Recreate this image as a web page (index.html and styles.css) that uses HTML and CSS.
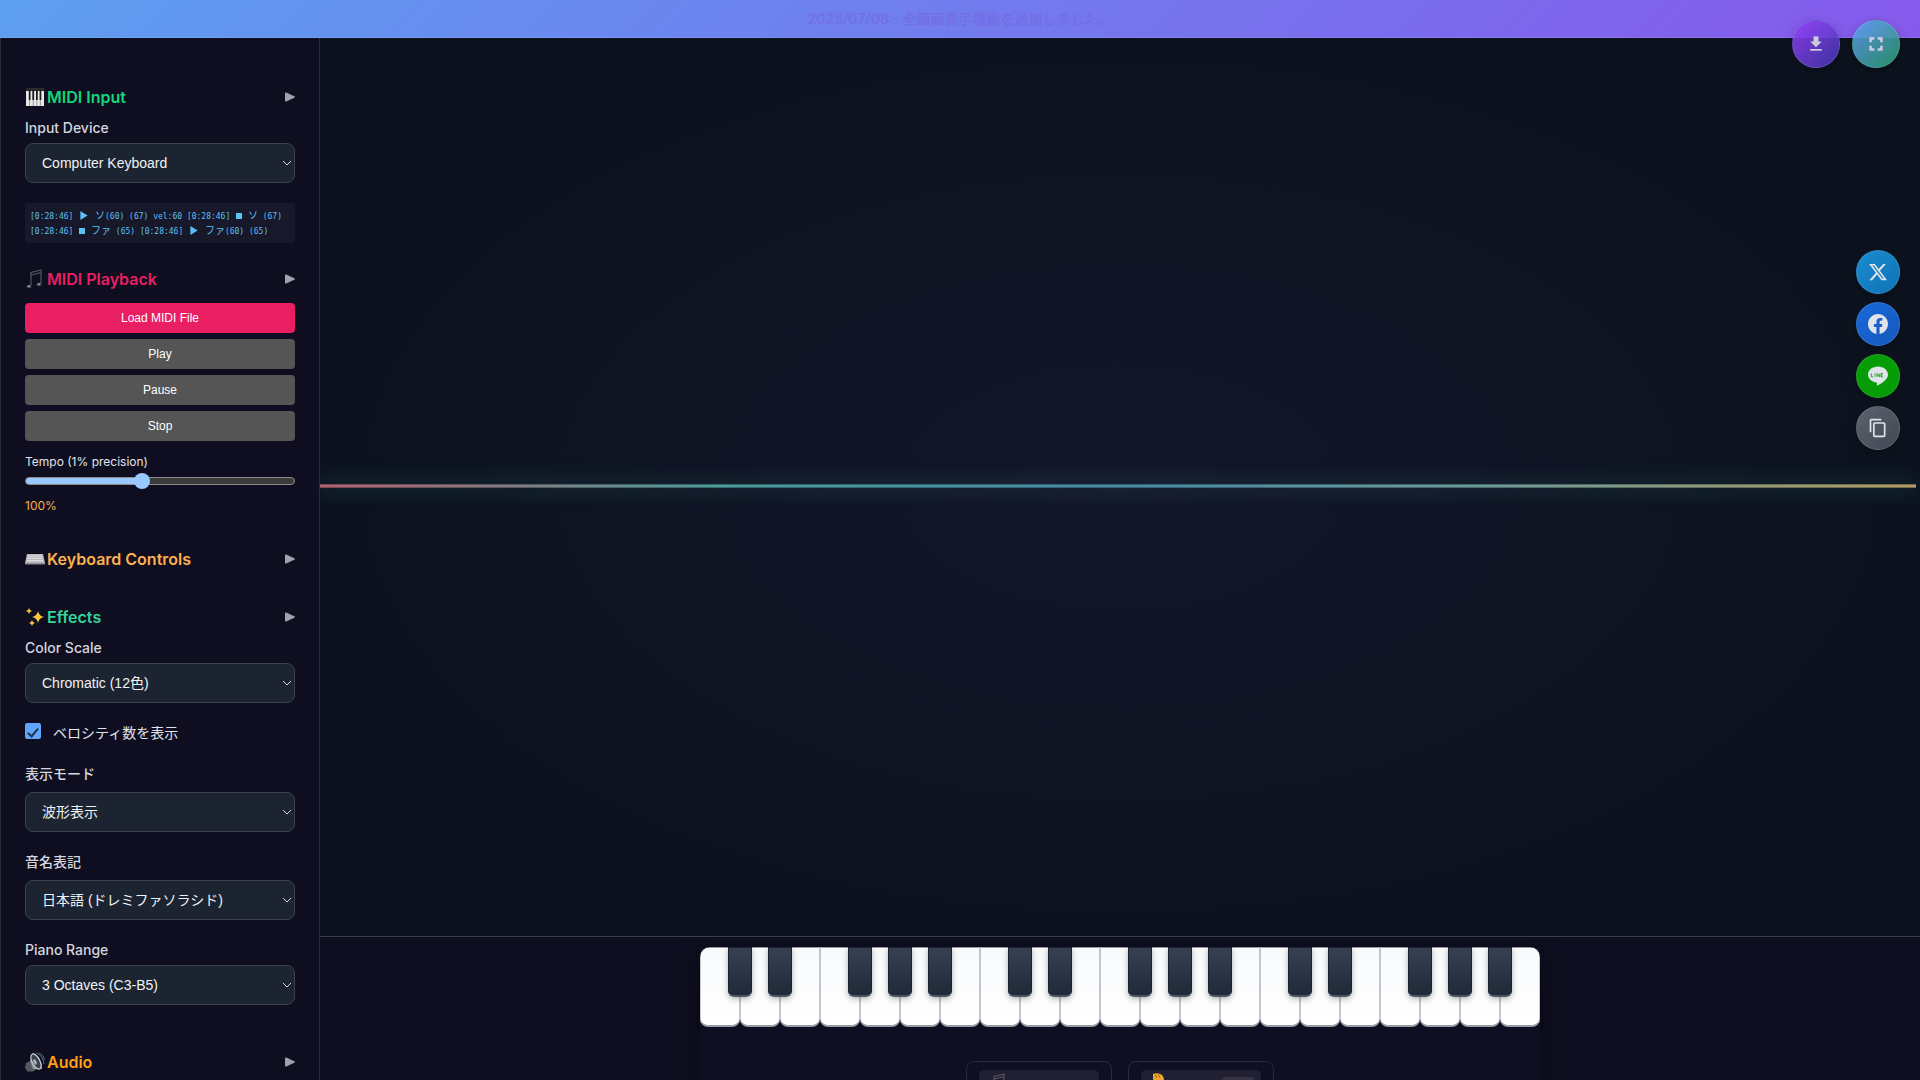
FILE: index.html
```html
<!DOCTYPE html>
<html lang="ja">
<head>
<meta charset="utf-8">
<meta name="viewport" content="width=device-width, initial-scale=1">
<title>MIDI Visualizer</title>
<link rel="stylesheet" href="styles.css">
</head>
<body>
<header class="notice"><p class="notice-text">2025/07/08 - 全画面表示機能を追加しました。</p></header>

<div class="app">
  <aside class="sidebar">
    <section class="section section-input">
      <h2 class="heading green">
        <svg class="emoji" viewBox="0 0 20 20" aria-hidden="true"><path fill="#2a2a2c" d="M1 1h18v3H1z"/><path fill="#e8e8e4" d="M1 4h18v15H1z"/><path stroke="#777" stroke-width=".7" d="M4.600 4v15M8.200 4v15M11.800 4v15M15.400 4v15"/><path fill="#17171b" d="M3.800 3h1.700v10H3.800zM7.400 3h1.700v10H7.400zM11 3h1.700v10H11zM14.600 3h1.700v10h-1.700z"/></svg>
        MIDI Input <svg class="arrow" viewBox="0 0 10 10" aria-hidden="true"><path d="M0 1.500Q0 0 1.300.6l8 3.700q1.300.7 0 1.400l-8 3.700Q0 10 0 8.500z"/></svg>
      </h2>
      <label class="label" for="device">Input Device</label>
      <div class="select-wrap"><select class="select" id="device"><option>Computer Keyboard</option></select><svg class="chevron" viewBox="0 0 10 6" aria-hidden="true"><path d="M1 1l4 4 4-4"/></svg></div>
      <div class="log">[0:28:46] <svg class="mark-play" viewBox="0 0 8 10" role="img"><path d="M0 0l8 5-8 5z"/></svg> <span class="kana">ソ</span>(60) (67) vel:60 [0:28:46] <i class="mark-stop"></i> <span class="kana">ソ</span> (67)<br>[0:28:46] <i class="mark-stop"></i> <span class="kana">ファ</span> (65) [0:28:46] <svg class="mark-play" viewBox="0 0 8 10" role="img"><path d="M0 0l8 5-8 5z"/></svg> <span class="kana">ファ</span>(60) (65)</div>
    </section>

    <section class="section section-playback">
      <h2 class="heading pink">
        <svg class="emoji" viewBox="0 0 20 20" aria-hidden="true"><path fill="none" stroke="#55565c" stroke-width="1.200" d="M6 16V3.500L16 1v14M6 6l10-2.500"/><ellipse cx="4" cy="17.500" rx="2.500" ry="1.800" fill="#4b4d54"/><ellipse cx="14" cy="15.500" rx="2.500" ry="1.800" fill="#4b4d54"/><path stroke="#c9ccd2" d="M3 17.500l2-.8M13 15.500l2-.8"/></svg>
        MIDI Playback <svg class="arrow" viewBox="0 0 10 10" aria-hidden="true"><path d="M0 1.500Q0 0 1.300.6l8 3.700q1.300.7 0 1.400l-8 3.700Q0 10 0 8.500z"/></svg>
      </h2>
      <div class="buttons">
        <button class="button primary" type="button">Load MIDI File</button>
        <button class="button" type="button">Play</button>
        <button class="button" type="button">Pause</button>
        <button class="button" type="button">Stop</button>
      </div>
      <label class="tempo-label" for="tempo">Tempo (1% precision)</label>
      <input class="tempo" id="tempo" type="range" min="10" max="220" value="100">
      <output class="tempo-value" for="tempo">100%</output>
    </section>

    <section class="section section-keys">
      <h2 class="heading orange">
        <svg class="emoji" viewBox="0 0 20 20" aria-hidden="true"><path fill="#b9b9bd" d="M2 5h16l2 9H0z"/><path fill="#8d8d92" d="M0 14h20v1.500H0z"/><path stroke="#e9e9eb" stroke-width="1.200" stroke-dasharray="1.600 .5" d="M3 7h14M2.500 9.300h15M2 11.600h16"/></svg>
        Keyboard Controls <svg class="arrow" viewBox="0 0 10 10" aria-hidden="true"><path d="M0 1.500Q0 0 1.300.6l8 3.700q1.300.7 0 1.400l-8 3.700Q0 10 0 8.500z"/></svg>
      </h2>
    </section>

    <section class="section section-effects">
      <h2 class="heading mint">
        <svg class="emoji" viewBox="0 0 20 20" aria-hidden="true"><path fill="#ffc93c" d="M13 4q.8 5 6 6-5.200 1-6 6-.8-5-6-6 5.200-1 6-6zM4 1q.4 2.600 3 3-2.600.4-3 3-.4-2.600-3-3 2.600-.4 3-3zM7 13q.4 2.600 3 3-2.600.4-3 3-.4-2.600-3-3 2.600-.4 3-3z"/></svg>
        Effects <svg class="arrow" viewBox="0 0 10 10" aria-hidden="true"><path d="M0 1.500Q0 0 1.300.6l8 3.700q1.300.7 0 1.400l-8 3.700Q0 10 0 8.500z"/></svg>
      </h2>
      <div class="field">
        <label class="label" for="scale">Color Scale</label>
        <div class="select-wrap"><select class="select" id="scale"><option>Chromatic (12色)</option></select><svg class="chevron" viewBox="0 0 10 6" aria-hidden="true"><path d="M1 1l4 4 4-4"/></svg></div>
      </div>
      <div class="check-row"><input class="check" id="velocity" type="checkbox" checked><label class="check-label" for="velocity">ベロシティ数を表示</label></div>
      <div class="field">
        <label class="label label-ja" for="mode">表示モード</label>
        <div class="select-wrap"><select class="select" id="mode"><option>波形表示</option></select><svg class="chevron" viewBox="0 0 10 6" aria-hidden="true"><path d="M1 1l4 4 4-4"/></svg></div>
      </div>
      <div class="field">
        <label class="label label-ja" for="names">音名表記</label>
        <div class="select-wrap"><select class="select" id="names"><option>日本語 (ドレミファソラシド)</option></select><svg class="chevron" viewBox="0 0 10 6" aria-hidden="true"><path d="M1 1l4 4 4-4"/></svg></div>
      </div>
      <div class="field">
        <label class="label" for="range">Piano Range</label>
        <div class="select-wrap"><select class="select" id="range"><option>3 Octaves (C3-B5)</option></select><svg class="chevron" viewBox="0 0 10 6" aria-hidden="true"><path d="M1 1l4 4 4-4"/></svg></div>
      </div>
    </section>

    <section class="section">
      <h2 class="heading amber">
        <svg class="emoji" viewBox="0 0 20 20" aria-hidden="true"><path fill="#55595e" d="M1 11l4-2 7 8-4 2.500H2.500L0 16z"/><path fill="#8c969d" d="M5 9L8 1q9 4 9 16l-9 0z"/><ellipse cx="11" cy="9.500" rx="3.800" ry="8.300" transform="rotate(-28 11 9.500)" fill="#39434b" stroke="#c8d0d3" stroke-width="1.200"/><ellipse cx="10" cy="10" rx="1.500" ry="3" transform="rotate(-28 10 10)" fill="#a5b2b9"/><path fill="none" stroke="#507083" d="M11 1q7 2 8 11M14 .8q4.500 2 5.500 7"/></svg>
        Audio <svg class="arrow" viewBox="0 0 10 10" aria-hidden="true"><path d="M0 1.500Q0 0 1.300.6l8 3.700q1.300.7 0 1.400l-8 3.700Q0 10 0 8.500z"/></svg>
      </h2>
    </section>
  </aside>

  <main class="main">
    <div class="stage"><div class="wave"></div></div>
    <div class="piano-panel">
      <div class="piano-box">
        <div class="piano" id="piano"></div>
        <div class="cards">
          <div class="card"><div class="card-head">
            <svg class="emoji" viewBox="0 0 20 20" aria-hidden="true"><path fill="none" stroke="#55565c" stroke-width="1.200" d="M6 16V3.500L16 1v14M6 6l10-2.500"/></svg>
          </div></div>
          <div class="card"><div class="card-head">
            <svg class="emoji" viewBox="0 0 20 20" aria-hidden="true"><path fill="#f0a92c" d="M3 1q4-1.500 7 0 4 1 4 7v10H6Q4 9 3 6z"/><path stroke="#8a5510" d="M5 2l2 3M8 1.500l2 3"/></svg>
            <span class="badge"></span>
          </div></div>
        </div>
      </div>
    </div>
  </main>
</div>

<div class="top-actions">
  <button class="round download" type="button" aria-label="Download"><svg viewBox="0 0 24 24"><path d="M5 20h14v-2H5v2zM19 9h-4V3H9v6H5l7 7 7-7z"/></svg></button>
  <button class="round fullscreen" type="button" aria-label="Fullscreen"><svg viewBox="0 0 24 24"><path d="M4 4h6v3H7v3H4zM14 4h6v6h-3V7h-3zM4 14h3v3h3v3H4zM17 14h3v6h-6v-3h3z"/></svg></button>
</div>
<nav class="share">
  <a class="bubble x" href="#x" aria-label="X"><svg viewBox="0 0 24 24"><path d="M18.244 2.250h3.308l-7.227 8.260 8.502 11.240H16.170l-5.214-6.817L4.990 21.750H1.680l7.730-8.835L1.254 2.250H8.080l4.713 6.231zm-1.161 17.520h1.833L7.084 4.126H5.117z"/></svg></a>
  <a class="bubble facebook" href="#facebook" aria-label="Facebook"><svg viewBox="0 0 24 24"><path d="M24 12.073c0-6.627-5.373-12-12-12s-12 5.373-12 12c0 5.990 4.388 10.954 10.125 11.854v-8.385H7.078v-3.470h3.047V9.430c0-3.007 1.792-4.669 4.533-4.669 1.312 0 2.686.235 2.686.235v2.953H15.830c-1.491 0-1.956.925-1.956 1.874v2.250h3.328l-.532 3.470h-2.796v8.385C19.612 23.027 24 18.062 24 12.073z"/></svg></a>
  <a class="bubble line" href="#line" aria-label="LINE"><svg viewBox="0 0 24 24"><path d="M24 10.300C24 4.900 18.600.6 12 .6S0 4.900 0 10.300c0 4.800 4.300 8.900 10 9.600.9.200 1 .6.800 1.500l-.3 1.700c0 .5.300.8 1 .4 4-2 12.500-7 12.500-13.200z"/><path class="line-mark" d="M4 9v4h2M8.500 9v4M11 13V9l2.500 4V9M18 9h-2.500v4H18M15.500 11h2"/></svg></a>
  <button class="bubble copy" type="button" aria-label="Copy link"><svg viewBox="0 0 24 24"><path d="M16 1H4c-1.100 0-2 .9-2 2v14h2V3h12V1zm3 4H8c-1.100 0-2 .9-2 2v14c0 1.100.9 2 2 2h11c1.100 0 2-.9 2-2V7c0-1.100-.9-2-2-2zm0 16H8V7h11v14z"/></svg></button>
</nav>
<script src="piano.js"></script>
</body>
</html>
```
FILE: styles.css
```css
*, *::before, *::after { box-sizing: border-box; }
body {
  margin: 0;
  height: 100vh;
  display: flex;
  flex-direction: column;
  overflow: hidden;
  background: #0c131f;
  color: #e2e4ea;
  font-family: Inter, "Noto Sans CJK JP", sans-serif;
}
.notice {
  height: 38px;
  flex: none;
  display: flex;
  align-items: center;
  justify-content: center;
  background: linear-gradient(135deg, #5d9ff0, #8659ec);
  border-bottom: 1px solid rgba(255, 255, 255, .1);
}
.notice-text { margin: 0; font-size: 14px; line-height: 20px; font-weight: 600; color: #736fe6; }
.app { flex: 1; min-height: 0; display: flex; }

.sidebar {
  width: 320px;
  flex: none;
  padding: 47px 24px 0;
  overflow: hidden;
  background: #0e0e20;
  border: solid #292a3a;
  border-width: 0 1px;
}
.section { display: flex; flex-direction: column; }
.section-input { margin-bottom: 24px; }
.section-playback { margin-bottom: 32px; }
.section-keys { margin-bottom: 34px; }
.section-effects { margin-bottom: 45px; }
.heading {
  display: flex;
  align-items: center;
  gap: 2px;
  margin: 0 0 12px;
  font-size: 16px;
  line-height: 24px;
  font-weight: 600;
}
.section-input .heading, .section-effects .heading { margin-bottom: 9px; }
.section-keys .heading { margin-bottom: 0; }
.emoji { width: 20px; height: 20px; flex: none; }
.arrow { width: 10px; height: 10px; margin-left: auto; fill: #a0a0b0; }
.green { color: #10d978; }
.pink { color: #e91e63; }
.orange { color: #ffb04f; }
.mint { color: #34d399; }
.amber { color: #ff9f1a; }

.label { display: block; margin-bottom: 5px; font-size: 14px; line-height: 20px; font-weight: 500; color: #d5d6de; }
.label-ja { margin-bottom: 8px; }
.select-wrap { display: grid; align-items: center; }
.select, .chevron { grid-area: 1 / 1; }
.select {
  appearance: none;
  width: 100%;
  height: 40px;
  padding: 0 16px;
  border: 1px solid #3c434f;
  border-radius: 8px;
  background: #1c2431;
  color: #f1f2f5;
  font: 14px "Liberation Sans", "Noto Sans CJK JP", sans-serif;
}
.chevron { width: 10px; height: 6px; justify-self: end; margin-right: 3px; fill: none; stroke: #d5d7dc; stroke-width: 1; pointer-events: none; }
.log {
  height: 40px;
  margin-top: 20px;
  padding: 6px 5px;
  border-radius: 3px;
  background: #171829;
  color: #5bc0f5;
  font: 8px/15px "DejaVu Sans Mono", "Noto Sans CJK JP", monospace;
  white-space: nowrap;
}
.kana { font-size: 10px; line-height: 1; }
.mark-play { width: 8px; height: 9px; margin: 0 2px; vertical-align: -1px; fill: currentColor; }
.mark-stop { display: inline-block; width: 6px; height: 6px; margin: 0 1px; background: currentColor; }

.buttons { display: grid; gap: 6px; }
.button {
  height: 30px;
  border: 0;
  border-radius: 4px;
  background: #555;
  color: #fff;
  font: 12px "Liberation Sans", sans-serif;
}
.primary { background: #e91e63; }
.tempo-label { margin-top: 12px; font-size: 12px; line-height: 18px; }
.tempo {
  appearance: none;
  height: 16px;
  width: 100%;
  margin: 2px 0 0;
  background: transparent;
}
.tempo::-webkit-slider-runnable-track {
  height: 8px;
  border: 1px solid #8b8b8b;
  border-radius: 4px;
  background: linear-gradient(90deg, #99c8ff 43%, #3b3b3b 43%);
}
.tempo::-webkit-slider-thumb {
  appearance: none;
  width: 16px;
  height: 16px;
  margin-top: -5px;
  border-radius: 50%;
  background: #99c8ff;
}
.tempo-value { margin-top: 8px; font-size: 12px; line-height: 18px; color: #ffb04f; }

.field + .field { margin-top: 20px; }
.check-row { display: flex; align-items: flex-start; gap: 12px; margin: 20px 0 21px; }
.check {
  appearance: none;
  width: 16px;
  height: 16px;
  margin: 0;
  border-radius: 2px;
  background: #60a5fa;
  display: grid;
  place-items: center;
}
.check::after { content: ""; width: 6px; height: 11px; border: solid #243247; border-width: 0 2px 2px 0; transform: rotate(40deg); }
.check-label { font-size: 14px; line-height: 20px; }

.main { flex: 1; min-width: 0; display: flex; flex-direction: column; }
.stage {
  flex: 1;
  display: flex;
  align-items: center;
  padding: 0 4px 2px 0;
  background: radial-gradient(ellipse at center, #13172a 0%, #0c131f 70%);
}
.wave {
  flex: 1;
  height: 4px;
  border: solid rgba(12, 19, 31, .35);
  border-width: 1px 0;
  background: linear-gradient(90deg, #b5616e, #4a9a98 25%, #468aa6 50%, #6f9994 75%, #b09c60);
  box-shadow: 0 0 20px rgba(78, 205, 196, .35);
}
.piano-panel {
  height: 144px;
  flex: none;
  display: flex;
  justify-content: center;
  padding-top: 10px;
  border-top: 1px solid #3a3b49;
  background: #0f0e20;
  overflow: hidden;
}
.piano-box { height: 240px; border-radius: 12px; background: #0e0f22; box-shadow: 0 8px 32px rgba(0, 0, 0, .4); }
.piano { display: flex; border-radius: 10px 10px 0 0; overflow: hidden; }
.key {
  position: relative;
  width: 40px;
  height: 80px;
  border: 1px solid #c5c7cc;
  border-top-color: #9799a0;
  border-bottom: 2px solid #9a9ca4;
  border-radius: 0 0 8px 8px;
  background: linear-gradient(#f8fafc, #fff);
}
.sharp::after {
  content: "";
  position: absolute;
  z-index: 1;
  top: -1px;
  right: -13px;
  width: 24px;
  height: 50px;
  border: 1px solid #182230;
  border-bottom: 2px solid #4b5563;
  border-radius: 0 0 6px 6px;
  background: linear-gradient(#374151, #1f2937);
  box-shadow: 0 2px 6px rgba(0, 0, 0, .3);
}
.cards { display: flex; justify-content: center; gap: 16px; margin-top: 34px; }
.card { width: 146px; height: 120px; padding: 8px 12px; border: 1px solid #292a39; border-radius: 8px; }
.card-head { height: 40px; display: flex; align-items: flex-start; padding: 3px 7px 0 9px; border-radius: 5px; background: #211f32; }
.badge { width: 32px; height: 20px; margin: 4px 0 0 auto; border-radius: 3px; background: #353344; }

.top-actions { position: fixed; top: 20px; right: 20px; display: flex; gap: 12px; }
.round, .bubble { display: grid; place-items: center; padding: 0; border-radius: 50%; border: 1px solid rgba(255, 255, 255, .12); box-shadow: 0 4px 12px rgba(0, 0, 0, .3); }
.round { width: 48px; height: 48px; opacity: .9; }
.round svg { width: 20px; height: 20px; fill: #e4e0f2; }
.download { background: linear-gradient(135deg, #9340f5, #4338b0); }
.fullscreen { background: linear-gradient(135deg, #609cf4, #2a9c6c); }
.share { position: fixed; top: 250px; right: 20px; display: grid; gap: 8px; }
.bubble { width: 44px; height: 44px; }
.bubble svg { width: 20px; height: 20px; fill: #dfe3ea; }
.x { background: linear-gradient(135deg, #1a8bd0, #0e73b5); }
.facebook { background: linear-gradient(135deg, #1769da, #1558bd); }
.line { background: #059c05; }
.bubble .line-mark { fill: none; stroke: #059c05; stroke-width: 1; }
.copy { background: linear-gradient(135deg, #5b616d, #414955); }
```
FILE: piano.js
```js
// Three octaves of seven white keys; E and B have no sharp after them.
const piano = document.getElementById('piano');
for (let i = 0; i < 21; i++) {
  const key = document.createElement('div');
  key.className = [2, 6].includes(i % 7) ? 'key' : 'key sharp';
  piano.append(key);
}
```
